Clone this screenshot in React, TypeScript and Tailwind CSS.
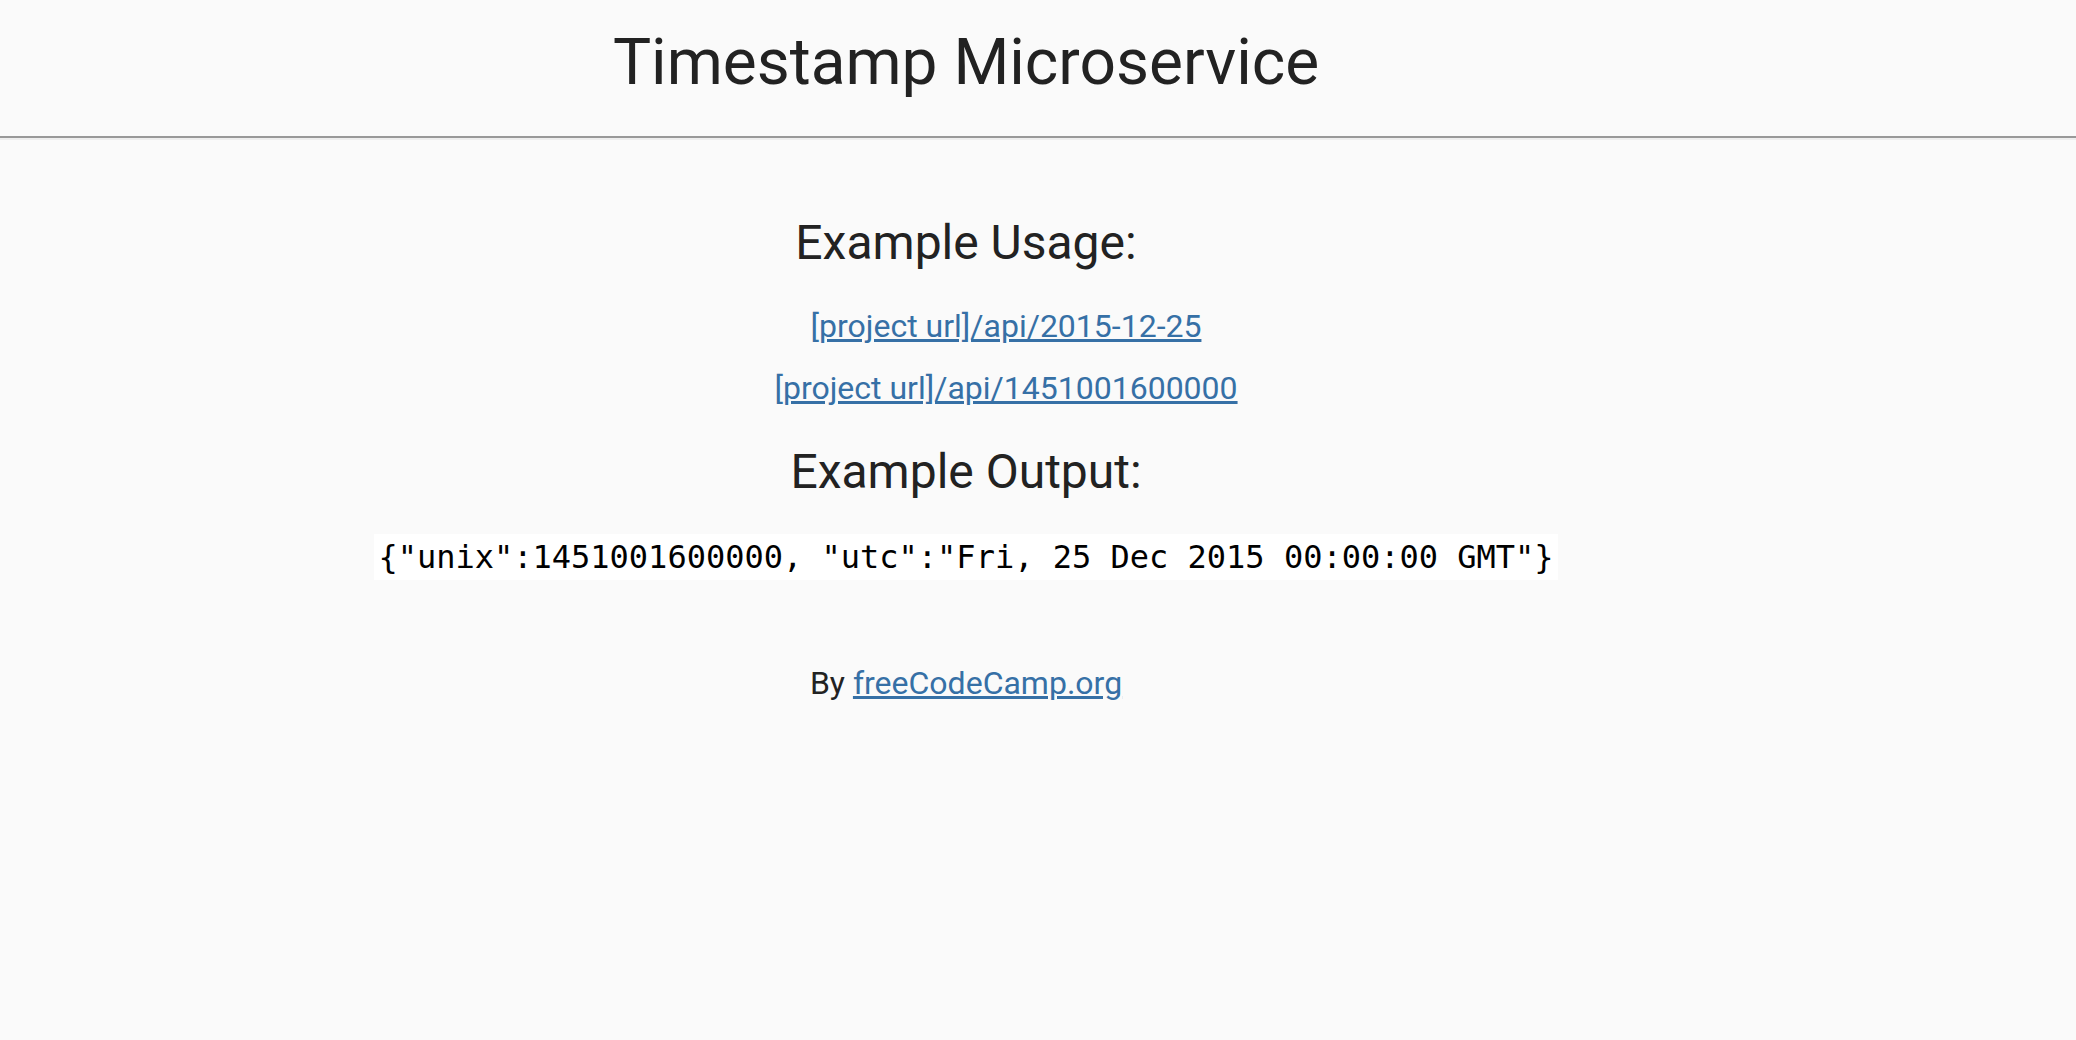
import React from 'react';

const links = ['[project url]/api/2015-12-25', '[project url]/api/1451001600000'];

export default function App() {
  return (
    <div className="min-h-screen bg-[#fafafa] text-[#222] text-center font-['Roboto',sans-serif] text-[32px] leading-[44.8px]">
      <div className="w-[1932px] pt-[18px]">
        <h1 className="text-[64px] leading-[89.6px] font-normal">Timestamp Microservice</h1>
      </div>

      <hr className="mt-[28px] border-t-2 border-b-2 border-t-[#999] border-b-[#eeeeee]" />

      <div className="w-[1932px]">
        <h3 className="mt-[69px] text-[48px] leading-[67.2px] font-normal">Example Usage:</h3>
        <ul className="mt-[28px] pl-[80px] flex flex-col gap-[17px]">
          {links.map(l => (
            <li key={l}>
              <a className="text-[#3670a6] underline" href="#">{l}</a>
            </li>
          ))}
        </ul>

        <h3 className="mt-[28px] text-[48px] leading-[67.2px] font-normal">Example Output:</h3>
        <p className="mt-[29px]">
          <code className="font-['DejaVu_Sans_Mono',monospace] text-[32px] text-black bg-white p-[4px]">
            {'{"unix":1451001600000, "utc":"Fri, 25 Dec 2015 00:00:00 GMT"}'}
          </code>
        </p>

        <p className="mt-[82px]">
          By <a className="text-[#3670a6] underline" href="#">freeCodeCamp.org</a>
        </p>
      </div>
    </div>
  );
}
